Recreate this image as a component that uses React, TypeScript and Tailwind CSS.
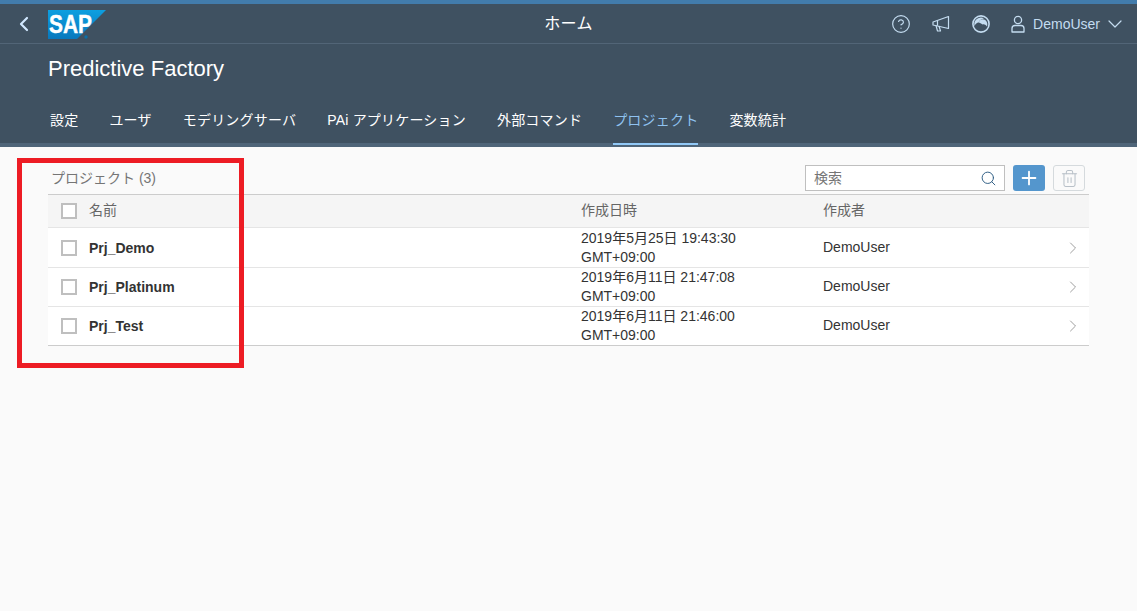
import React from 'react';
import { ChevronLeft, ChevronDown, ChevronRight, CircleHelp, Search, Plus, Trash2 } from 'lucide-react';

const tabs = ['設定', 'ユーザ', 'モデリングサーバ', 'PAi アプリケーション', '外部コマンド', 'プロジェクト', '変数統計'];

const rows = [
  { name: 'Prj_Demo', date: '2019年5月25日 19:43:30', height: 'h-[40px] border-b' },
  { name: 'Prj_Platinum', date: '2019年6月11日 21:47:08', height: 'h-[39px] border-b' },
  { name: 'Prj_Test', date: '2019年6月11日 21:46:00', height: 'h-[38px]' },
];

const SapLogo = () => (
  <svg width="58" height="29" viewBox="0 0 58 29">
    <defs>
      <linearGradient id="sapBlue" x1="0" y1="0" x2="0" y2="1">
        <stop offset="0" stopColor="#0d9fe0" />
        <stop offset="1" stopColor="#0878bd" />
      </linearGradient>
    </defs>
    <path d="M0 0H58L29 29H0Z" fill="url(#sapBlue)" />
    <text x="1" y="23" fontFamily="'Liberation Sans', sans-serif" fontSize="25" fontWeight="700" fill="#fff" textLength="43" lengthAdjust="spacingAndGlyphs" stroke="#fff" strokeWidth="0.4">SAP</text>
    <circle cx="38" cy="27" r="1.7" fill="#0b6fa8" />
  </svg>
);

const Feedback = () => (
  <svg width="18" height="18" viewBox="0 0 18 18" fill="none" stroke="#c4dcf0" strokeWidth="1.2" strokeLinejoin="round">
    <path d="M1 7 16.5 1.5V13.5L1 10Z" />
    <path d="M4 10.5 5.5 16H8.5L7 11" />
    <path d="M5.5 5.5V10.8" />
  </svg>
);

const Gauge = () => (
  <svg width="18" height="18" viewBox="0 0 18 18">
    <circle cx="9" cy="9" r="8.1" fill="none" stroke="#c4dcf0" strokeWidth="1.6" />
    <path d="M2.5 11A6.8 6.8 0 0 1 12 3.2C9.5 4 7.5 5 6.5 7.5 5 7.5 3.5 9 2.5 11Z" fill="#c4dcf0" />
    <path d="M6.5 7.5C8 3.5 12.5 3 14.5 6.5 15.5 8.2 15.5 10 15 11.5 13.5 9.5 12 9 10.5 9.5 9 8.5 8 7.5 6.5 7.5Z" fill="#c4dcf0" />
  </svg>
);

const UserIcon = () => (
  <svg width="14" height="18" viewBox="0 0 14 18" fill="none" stroke="#c4dcf0" strokeWidth="1.3">
    <circle cx="7" cy="5" r="3.6" />
    <path d="M1 17V13.5C1 11.5 2.5 10.5 4 10.5H10C11.5 10.5 13 11.5 13 13.5V17Z" strokeLinejoin="round" />
  </svg>
);

const Checkbox = () => <div className="w-4 h-4 border-2 border-[#bfbfbf] bg-white shrink-0" />;

export default function App() {
  return (
    <div className="relative min-h-[611px] bg-[#fafafa] font-['Liberation_Sans','Noto_Sans_CJK_JP',sans-serif] text-sm text-[#333333]">
      <header className="bg-[#3f5161] border-t-4 border-[#427cac]">
        <div className="h-[39px] border-b border-[#526577] grid grid-cols-3 items-center box-content">
          <div className="flex items-center">
            <ChevronLeft className="w-6 h-6 ml-[12px] text-[#d1e8ff]" strokeWidth={2.2} />
            <div className="ml-[12px] h-[29px] mt-[1px]">
              <SapLogo />
            </div>
          </div>
          <div className="text-center text-base tracking-[0.3px] text-white">ホーム</div>
          <div className="flex items-center justify-end text-[#c4dcf0]">
            <CircleHelp className="w-5 h-5 mr-[21px]" strokeWidth={1.4} />
            <div className="mr-[22px] h-[18px]"><Feedback /></div>
            <div className="mr-[21px] h-[18px]"><Gauge /></div>
            <div className="mr-[8px] h-[18px]"><UserIcon /></div>
            <span>DemoUser</span>
            <ChevronDown className="w-6 h-6 ml-[3px] mr-[10px]" strokeWidth={1.2} />
          </div>
        </div>
        <h1 className="pl-[48px] pt-[11px] h-[49px] text-[22px] leading-[28px] text-white">Predictive Factory</h1>
        <nav className="pl-[50px] h-[54px] flex gap-[31px] border-b-4 border-[#4f6579] tracking-[0.2px]">
          {tabs.map((tab) => (
            <div
              key={tab}
              className={
                tab === 'プロジェクト'
                  ? 'h-[52px] pt-[17px] leading-[20px] text-[#8fc2f0] border-b-2 border-[#91c8f6]'
                  : 'h-[50px] pt-[17px] leading-[20px] text-white'
              }
            >
              {tab}
            </div>
          ))}
        </nav>
      </header>

      <main className="pl-[48px] pr-[48px] pt-[18px]">
        <div className="flex items-center h-[26px] mb-[3px]">
          <div className="pl-[3px] -mt-[1px] text-[#757575]">プロジェクト (3)</div>
          <div className="ml-auto flex items-center gap-[8px] pr-[4px]">
            <div className="w-[200px] h-[26px] border border-[#bfbfbf] bg-white flex items-center justify-between pl-[8px] pr-[7px] text-[#757575]">
              <span>検索</span>
              <Search className="w-[17px] h-[17px] text-[#346187]" strokeWidth={1.4} />
            </div>
            <button className="w-[32px] h-[26px] rounded-[3px] bg-[#5496cd] flex items-center justify-center">
              <Plus className="w-[22px] h-[22px] text-white" strokeWidth={2} />
            </button>
            <button className="w-[32px] h-[26px] rounded-[3px] border border-[#d5dadd] bg-[#fafafa] flex items-center justify-center">
              <Trash2 className="w-[19px] h-[19px] text-[#b8c0c8]" strokeWidth={1.3} />
            </button>
          </div>
        </div>

        <div className="border-t border-b border-[#cccccc]">
          <div className="grid grid-cols-[533px_242px_1fr] items-center h-[33px] bg-[#f5f5f5] border-b border-[#e5e5e5] text-[#666666]">
            <div className="flex items-center gap-[12px] pl-[13px]">
              <Checkbox />
              <span className="-mt-[2px]">名前</span>
            </div>
            <div className="-mt-[2px]">作成日時</div>
            <div className="-mt-[2px]">作成者</div>
          </div>
          {rows.map((row) => (
            <div
              key={row.name}
              className={`grid grid-cols-[533px_242px_1fr] items-center bg-white border-[#e5e5e5] ${row.height}`}
            >
              <div className="flex items-center gap-[12px] pl-[13px]">
                <Checkbox />
                <span className="font-bold">{row.name}</span>
              </div>
              <div className="leading-[19px]">
                {row.date}
                <br />
                GMT+09:00
              </div>
              <div className="flex items-center justify-between pr-[6px]">
                <span className="-mt-[2px]">DemoUser</span>
                <ChevronRight className="w-5 h-5 text-[#8c8c8c]" strokeWidth={1} />
              </div>
            </div>
          ))}
        </div>
      </main>

      {/* red annotation drawn over the screen */}
      <div className="absolute left-[17px] top-[158px] w-[227px] h-[210px] border-[5px] border-[#ed1c24] pointer-events-none" />
    </div>
  );
}
